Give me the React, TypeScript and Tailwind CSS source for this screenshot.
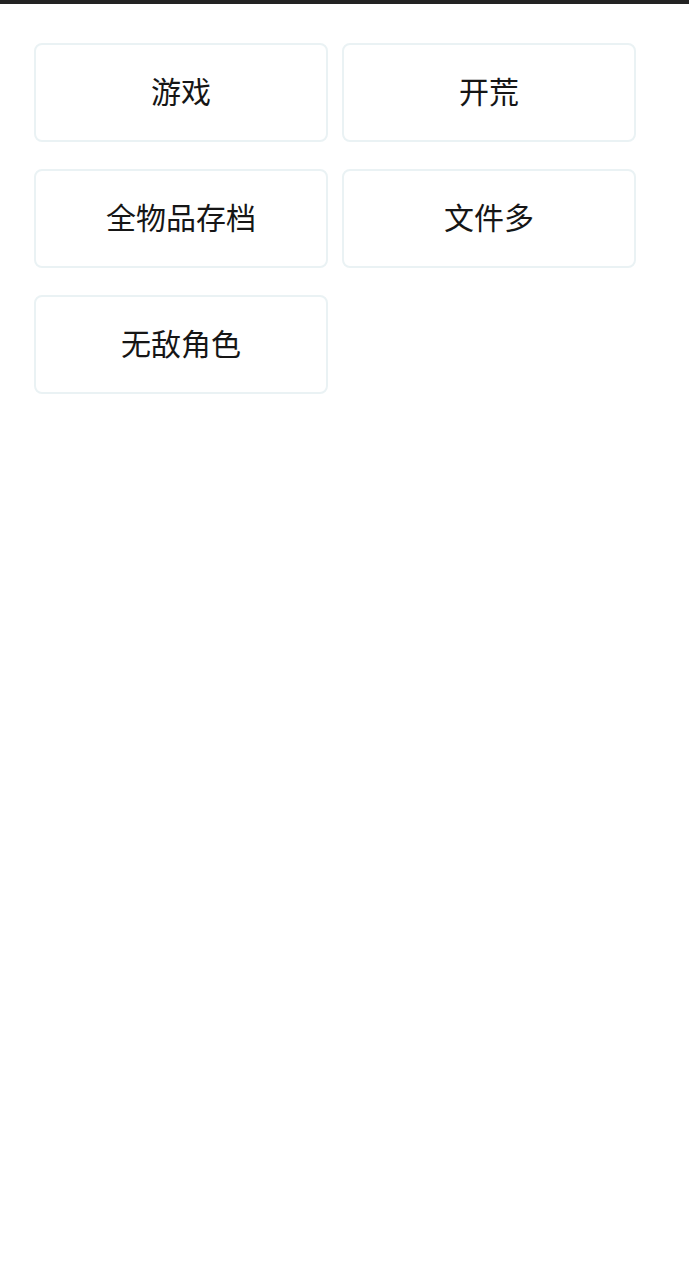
import React from "react";

const items = ["游戏", "开荒", "全物品存档", "文件多", "无敌角色"];

const App = () => {
  return (
    <div
      className="min-h-screen w-full bg-white"
      style={{ fontFamily: '"Noto Sans CJK SC", "Noto Sans", sans-serif' }}
    >
      <div className="h-[4px] bg-[#232323]" />
      <div className="grid grid-cols-[294px_294px] gap-x-[14px] gap-y-[27px] pl-[34px] pt-[39px]">
        {items.map((title) => (
          <div
            key={title}
            className="flex h-[99px] items-center justify-center rounded-[8px] border-2 border-[#eaf2f4] bg-white pb-[4px] text-[30px] text-[#161616]"
          >
            {title}
          </div>
        ))}
      </div>
    </div>
  );
};

export default App;
